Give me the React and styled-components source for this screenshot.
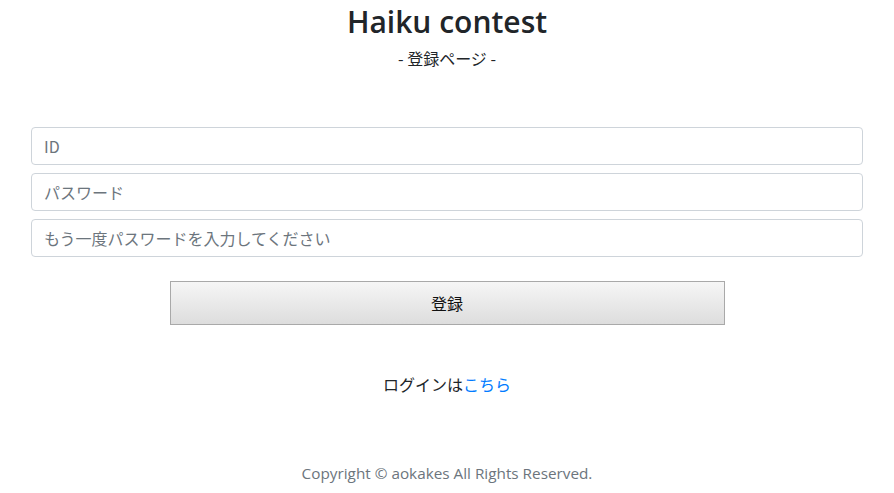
import React from 'react';
import styled, { createGlobalStyle } from 'styled-components';

const GlobalStyle = createGlobalStyle`
  body {
    margin: 0;
    background: #fff;
    color: #212529;
    font-family: "Open Sans", "Noto Sans CJK JP", sans-serif;
    font-size: 16px;
    line-height: 1.5;
  }
`;

const Page = styled.div`
  padding: 0 31px;
  text-align: center;
`;

const Header = styled.header`
  padding-top: 2px;
`;

const Title = styled.h1`
  margin: 0;
  font-size: 30px;
  font-weight: 600;
  line-height: 40px;
  color: #212529;
`;

const Subtitle = styled.p`
  margin: 4px 0 0;
  font-size: 16px;
  line-height: 24px;
  font-family: "Noto Sans CJK JP", sans-serif;
`;

const Form = styled.form`
  margin-top: 57px;
  display: flex;
  flex-direction: column;
  align-items: center;
`;

const Input = styled.input`
  box-sizing: border-box;
  display: block;
  width: 100%;
  height: 38px;
  margin-bottom: 8px;
  padding: 6px 12px;
  font-family: "Noto Sans CJK JP", sans-serif;
  font-size: 16px;
  color: #495057;
  background: #fff;
  border: 1px solid #ced4da;
  border-radius: 4px;
  outline: none;

  &::placeholder {
    color: #6c757d;
  }
`;

const Button = styled.button`
  box-sizing: border-box;
  width: 555px;
  height: 44px;
  margin-top: 16px;
  font-family: "Noto Sans CJK JP", sans-serif;
  font-size: 16px;
  color: #111;
  background: linear-gradient(#f6f6f6, #dddddd);
  border: 1px solid #a9a9a9;
  border-radius: 0;
`;

const LoginText = styled.p`
  margin: 47px 0 0;
  font-family: "Noto Sans CJK JP", sans-serif;
  font-size: 16px;
  line-height: 24px;
  color: #212529;
`;

const Link = styled.a`
  color: #007bff;
  text-decoration: none;
`;

const Footer = styled.footer`
  margin-top: 65px;
  font-size: 15.3px;
  line-height: 24px;
  color: #6c757d;
`;

export default function App() {
  return (
    <>
      <GlobalStyle />
      <Page>
        <Header>
          <Title>Haiku contest</Title>
          <Subtitle>- 登録ページ -</Subtitle>
        </Header>
        <Form onSubmit={e => e.preventDefault()}>
          <Input type="text" placeholder="ID" />
          <Input type="password" placeholder="パスワード" />
          <Input type="password" placeholder="もう一度パスワードを入力してください" />
          <Button type="submit">登録</Button>
        </Form>
        <LoginText>
          ログインは<Link href="#">こちら</Link>
        </LoginText>
        <Footer>Copyright © aokakes All Rights Reserved.</Footer>
      </Page>
    </>
  );
}
